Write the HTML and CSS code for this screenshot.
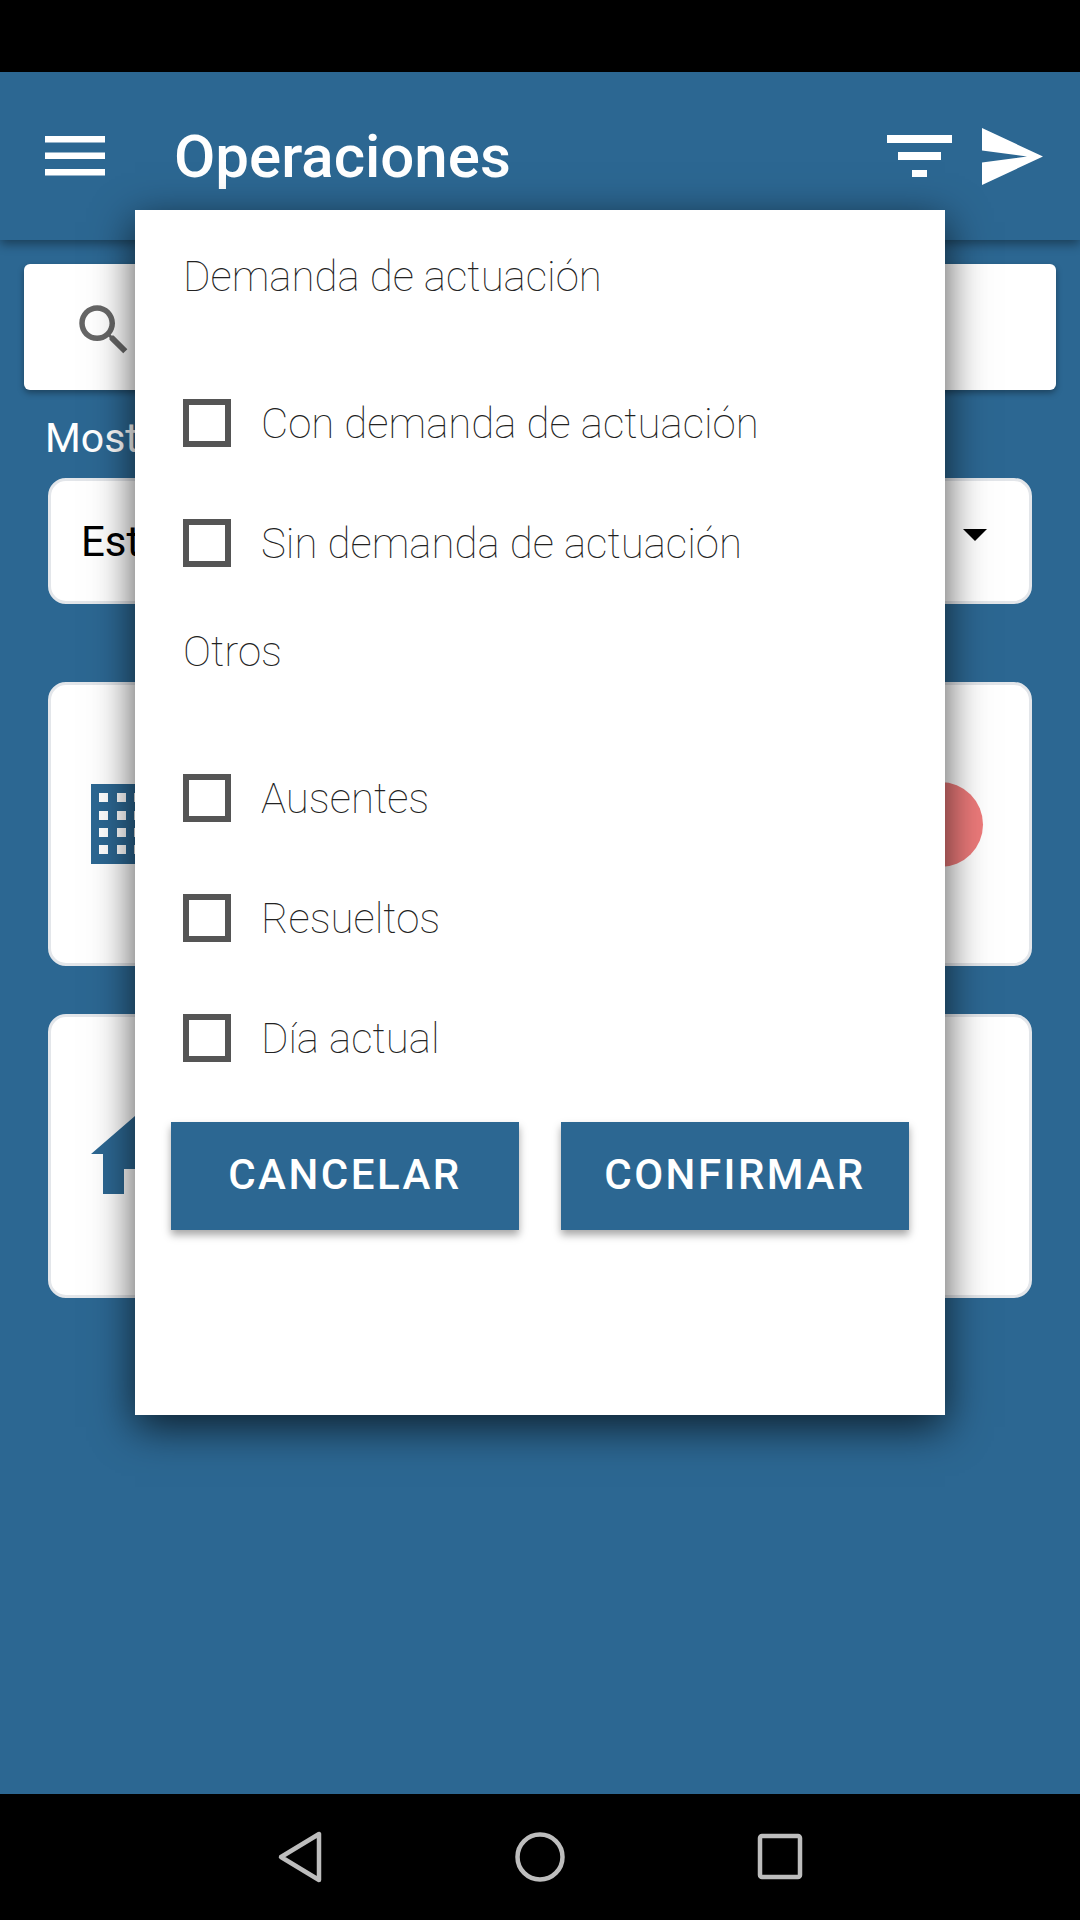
FILE: index.html
```html
<!DOCTYPE html>
<html lang="es">
<head>
    <meta charset="UTF-8">
    <meta name="viewport" content="width=device-width, initial-scale=1.0">
    <title>Operaciones</title>
    <link rel="stylesheet" href="styles.css">
</head>
<body>
    <div class="status-bar"></div>
    <header class="app-bar">
        <svg class="menu-icon" width="60" height="40" viewBox="0 0 60 40"><path fill="#fff" d="M0 0h60v6.500H0zM0 16.500h60v6.500H0zM0 33h60v6.500H0z"/></svg>
        <h1>Operaciones</h1>
        <svg class="filter-icon" width="65" height="42" viewBox="0 0 65 42"><path fill="#fff" d="M0 0h65v8H0zM11 17h43v8H11zM25 35h15v7H25z"/></svg>
        <svg class="send-icon" width="61" height="57" viewBox="0 0 61 57"><path fill="#fff" d="M0 0l61 28.500L0 57V34.500l45-6-45-6z"/></svg>
    </header>
    <main class="content">
        <div class="search-box">
            <svg width="66" height="66" viewBox="0 0 24 24"><path fill="#666" d="M15.500 14h-.79l-.28-.27C15.410 12.590 16 11.110 16 9.500 16 5.910 13.090 3 9.500 3S3 5.910 3 9.500 5.910 16 9.500 16c1.610 0 3.090-.59 4.230-1.570l.27.28v.79l5 4.990L20.490 19l-4.990-5zm-6 0C7.010 14 5 11.990 5 9.500S7.010 5 9.500 5 14 7.010 14 9.500 11.990 14 9.500 14z"/></svg>
        </div>
        <div class="show-label">Mostrar</div>
        <div class="select-box">
            <span>Estado</span>
            <div class="select-arrow"></div>
        </div>
        <div class="item-card">
            <svg width="60" height="80" viewBox="0 0 60 80"><path fill="#2c6792" fill-rule="evenodd" d="M0 0h60v80H0zM8 9v9h9V9zM26 9v9h9V9zM43 9v9h9V9zM8 27v9h9v-9zM26 27v9h9v-9zM43 27v9h9v-9zM8 44v9h9v-9zM26 44v9h9v-9zM43 44v9h9v-9zM8 61v9h9v-9zM26 61v9h9v-9zM43 61v9h9v-9z"/></svg>
            <div class="status-dot"></div>
        </div>
        <div class="item-card">
            <svg width="80" height="80" viewBox="0 0 80 80"><path fill="#2c6792" d="M0 38L44 0l36 38H68v40H50V53H33v25H12V38z"/></svg>
        </div>
    </main>
    <nav class="nav-bar">
        <svg width="60" height="60" viewBox="0 0 60 60"><path fill="none" stroke="#bdbdbd" stroke-width="4.500" stroke-linejoin="round" d="M11 30L49 7v46z"/></svg>
        <svg width="60" height="60" viewBox="0 0 60 60"><circle cx="30" cy="30" r="22.500" fill="none" stroke="#bdbdbd" stroke-width="4.500"/></svg>
        <svg width="60" height="60" viewBox="0 0 60 60"><rect x="10" y="9" width="40" height="41" rx="2" fill="none" stroke="#bdbdbd" stroke-width="4.500"/></svg>
    </nav>

    <div class="filter-dialog">
        <div class="section-title">Demanda de actuación</div>
        <div class="check-row"><div class="check-box"></div><span>Con demanda de actuación</span></div>
        <div class="check-row"><div class="check-box"></div><span>Sin demanda de actuación</span></div>
        <div class="section-title">Otros</div>
        <div class="check-row"><div class="check-box"></div><span>Ausentes</span></div>
        <div class="check-row"><div class="check-box"></div><span>Resueltos</span></div>
        <div class="check-row"><div class="check-box"></div><span>Día actual</span></div>
        <div class="dialog-actions">
            <button>CANCELAR</button>
            <button>CONFIRMAR</button>
        </div>
    </div>
</body>
</html>
```

FILE: styles.css
```css
* { margin: 0; padding: 0; box-sizing: border-box; }
html, body { height: 1920px; }
body { position: relative; width: 1080px; display: flex; flex-direction: column; background-color: #2c6792; font-family: 'Roboto', sans-serif; overflow: hidden; }
.status-bar { height: 72px; background-color: #000000; }

.app-bar { height: 168px; display: flex; align-items: center; padding: 0 37px 0 45px; background-color: #2c6792; box-shadow: 0 4px 10px rgba(0, 0, 0, 0.4); position: relative; }
.app-bar h1 { flex: 1; margin-left: 69px; color: #ffffff; font-size: 60px; font-weight: 500; }
.filter-icon { margin-right: 30px; }
.menu-icon, .filter-icon { margin-top: -1px; }

.content { flex: 1; padding: 24px 24px 0; }
.search-box { height: 126px; display: flex; align-items: center; padding: 5px 0 0 47px; background-color: #ffffff; border-radius: 6px; box-shadow: 0 3px 6px rgba(0, 0, 0, 0.35); }
.show-label { height: 88px; padding: 25px 0 0 21px; color: #ffffff; font-size: 41px; line-height: 47px; }
.select-box { height: 126px; margin: 0 24px; display: flex; align-items: center; justify-content: space-between; padding: 0 42px 0 30px; background-color: #ffffff; border: 3px solid #e3e6ea; border-radius: 18px; font-size: 42px; color: #000000; }
.select-arrow { width: 0; height: 0; margin-top: -12px; border-left: 12px solid transparent; border-right: 12px solid transparent; border-top: 12px solid #000000; }
.item-card { height: 284px; margin: 48px 24px 0; display: flex; align-items: center; justify-content: space-between; padding: 0 46px 0 40px; background-color: #ffffff; border: 3px solid #e3e6ea; border-radius: 18px; }
.select-box + .item-card { margin-top: 78px; }
.status-dot { width: 85px; height: 85px; border-radius: 50%; background-color: #ee7b7b; }

.nav-bar { height: 126px; display: flex; align-items: center; justify-content: center; gap: 180px; background-color: #000000; }

.filter-dialog { position: absolute; top: 210px; left: 135px; width: 810px; height: 1205px; padding: 18px 36px 0; background-color: #ffffff; box-shadow: 0 12px 40px rgba(0, 0, 0, 0.7); }
.section-title { height: 96px; margin: 0 0 39px 12px; line-height: 98px; font-size: 42px; font-weight: 100; color: #222222; }
.check-row { height: 120px; display: flex; align-items: center; padding-left: 12px; font-size: 42px; font-weight: 100; color: #222222; }
.check-box { width: 48px; height: 48px; margin-right: 30px; border: 6px solid #555555; }
.dialog-actions { margin-top: 24px; display: flex; gap: 42px; }
.dialog-actions button { flex: 1; height: 108px; padding-bottom: 4px; border: none; background-color: #2c6792; color: #ffffff; font-family: 'Roboto', sans-serif; font-size: 42px; font-weight: 500; letter-spacing: 2.500px; box-shadow: 0 5px 8px rgba(0, 0, 0, 0.35); }
```
